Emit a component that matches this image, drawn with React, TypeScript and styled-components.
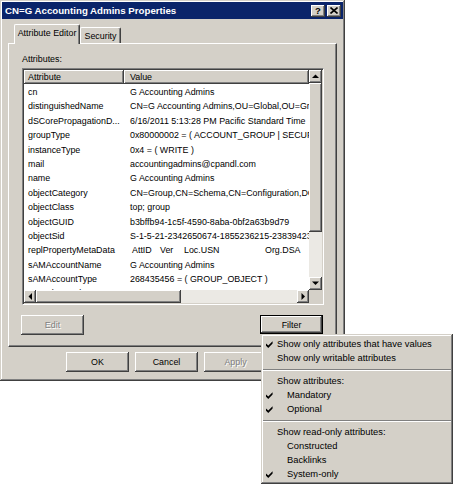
import React from 'react';
import styled, { createGlobalStyle, css } from 'styled-components';

const FACE = '#d4d0c8';
const SHADOW = '#808080';
const DARK = '#404040';
const UI_FONT = '"Liberation Sans", Arial, sans-serif';

const GlobalStyle = createGlobalStyle`
  html, body { margin: 0; padding: 0; background: #ffffff; }
  body { font-family: ${UI_FONT}; color: #000; }
`;

const buttonBevel = css`
  box-shadow: inset -1px -1px ${DARK}, inset 1px 1px #ffffff, inset -2px -2px ${SHADOW}, inset 2px 2px ${FACE};
`;

const frameBevel = css`
  box-shadow: inset -1px -1px ${DARK}, inset 1px 1px ${FACE}, inset -2px -2px ${SHADOW}, inset 2px 2px #ffffff;
`;

const Page = styled.div`
  position: relative;
  width: 454px;
  height: 491px;
  overflow: hidden;
`;

const Window = styled.div`
  width: 345px;
  height: 381px;
  box-sizing: border-box;
  padding: 2px;
  background: ${FACE};
  ${frameBevel}
  display: flex;
  flex-direction: column;
`;

const TitleBar = styled.div`
  height: 17px;
  background: #0a246a;
  color: #ffffff;
  display: flex;
  align-items: center;
  padding: 0 2px 0 3px;
  font-size: 9.7px;
  font-weight: bold;
`;

const TitleText = styled.span`
  flex: 1;
  white-space: nowrap;
`;

const CaptionButtons = styled.div`
  display: flex;
  gap: 2px;
`;

const CaptionButton = styled.div`
  width: 14px;
  height: 12px;
  background: ${FACE};
  ${buttonBevel}
  color: #000;
  display: flex;
  align-items: center;
  justify-content: center;
  font-size: 9.5px;
  font-weight: bold;
  line-height: 1;
`;

const Body = styled.div`
  padding: 5px 6px 0;
  font-size: 8.9px;
`;

const TabStrip = styled.div`
  height: 19px;
  display: flex;
  align-items: flex-end;
  padding-left: 6px;
`;

const Tab = styled.div<{ $active?: boolean }>`
  position: relative;
  z-index: 1;
  box-sizing: border-box;
  width: ${p => (p.$active ? 66 : 41)}px;
  height: ${p => (p.$active ? 20 : 16)}px;
  margin-bottom: ${p => (p.$active ? -1 : 0)}px;
  background: ${FACE};
  border-top: 1px solid #ffffff;
  border-left: 1px solid #ffffff;
  border-right: 1px solid ${DARK};
  box-shadow: inset -1px 0 ${SHADOW};
  border-radius: 2px 2px 0 0;
  display: flex;
  align-items: ${p => (p.$active ? 'flex-start' : 'center')};
  padding-top: ${p => (p.$active ? 3 : 0)}px;
  justify-content: center;
  white-space: nowrap;
`;

const Panel = styled.div`
  height: 304px;
  box-sizing: border-box;
  border: 1px solid;
  border-color: #ffffff ${DARK} ${DARK} #ffffff;
  box-shadow: inset -1px -1px ${SHADOW};
  padding: 9px 12px 0 13px;
  display: flex;
  flex-direction: column;
`;

const FieldLabel = styled.div`
  height: 12px;
  line-height: 12px;
`;

const ListBox = styled.div`
  margin-top: 3px;
  width: 302px;
  height: 237px;
  box-sizing: border-box;
  border: 1px solid;
  border-color: ${SHADOW} #ffffff #ffffff ${SHADOW};
  box-shadow: inset 1px 1px ${DARK}, inset -1px -1px ${FACE};
  padding: 1px;
  background: #ffffff;
  display: grid;
  grid-template-columns: 1fr 13px;
  grid-template-rows: 1fr 13px;
`;

const ListContent = styled.div`
  overflow: hidden;
  min-width: 0;
`;

const HeaderRow = styled.div`
  display: flex;
  height: 14px;
`;

const HeaderCell = styled.div<{ $width?: number; $pad: number }>`
  ${p => (p.$width ? `width: ${p.$width}px;` : 'flex: 1;')}
  box-sizing: border-box;
  background: ${FACE};
  ${buttonBevel}
  padding-left: ${p => p.$pad}px;
  line-height: 14px;
  white-space: nowrap;
  overflow: hidden;
`;

const Rows = styled.div`
  padding-top: 1px;
`;

const Row = styled.div`
  display: flex;
  height: 14.4px;
  line-height: 14.4px;
  white-space: nowrap;
`;

const AttrCell = styled.div`
  width: 100px;
  flex: none;
  box-sizing: border-box;
  padding-left: 4px;
  overflow: hidden;
`;

const ValueCell = styled.div`
  flex: 1;
  padding-left: 6px;
  overflow: hidden;
  display: flex;
`;

const MetaCol = styled.span<{ $w?: number; $pad?: number }>`
  ${p => (p.$w ? `width: ${p.$w}px;` : '')}
  flex: none;
  padding-left: ${p => p.$pad ?? 0}px;
`;

const ScrollBar = styled.div<{ $vertical?: boolean }>`
  display: flex;
  flex-direction: ${p => (p.$vertical ? 'column' : 'row')};
  background: #ebe9e4;
`;

const ScrollArrow = styled.div<{ $size: number; $vertical?: boolean }>`
  flex: none;
  ${p => (p.$vertical ? `height: ${p.$size}px;` : `width: ${p.$size}px;`)}
  background: ${FACE};
  ${buttonBevel}
  display: flex;
  align-items: center;
  justify-content: center;
`;

const ScrollThumb = styled.div<{ $size: number; $vertical?: boolean }>`
  flex: none;
  ${p => (p.$vertical ? `height: ${p.$size}px;` : `width: ${p.$size}px;`)}
  background: ${FACE};
  ${buttonBevel}
`;

const ScrollTrack = styled.div`
  flex: 1;
`;

const Corner = styled.div`
  background: ${FACE};
`;

const PanelButtons = styled.div`
  margin: 10px 1px 0 -1px;
  display: flex;
  justify-content: space-between;
`;

const PushButton = styled.div<{ $disabled?: boolean; $default?: boolean }>`
  width: 63px;
  height: ${p => (p.$default ? 19 : 20)}px;
  box-sizing: border-box;
  background: ${FACE};
  ${buttonBevel}
  ${p => (p.$default ? 'border: 1px solid #000;' : '')}
  display: flex;
  align-items: center;
  justify-content: center;
  color: ${p => (p.$disabled ? SHADOW : '#000')};
  text-shadow: ${p => (p.$disabled ? '1px 1px #ffffff' : 'none')};
`;

const DialogButtons = styled.div`
  margin-top: 5px;
  padding-left: 58px;
  display: flex;
  gap: 6px;
`;

const Menu = styled.div`
  position: absolute;
  left: 261px;
  top: 334px;
  width: 192px;
  box-sizing: border-box;
  background: ${FACE};
  ${frameBevel}
  padding: 3px;
  font-size: 9.35px;
`;

const MenuItem = styled.div`
  height: 14px;
  line-height: 14px;
  display: flex;
  align-items: center;
  white-space: nowrap;
`;

const CheckCell = styled.div`
  width: 13px;
  flex: none;
  display: flex;
  align-items: center;
  padding-left: 2px;
  box-sizing: border-box;
`;

const MenuLabel = styled.span<{ $indent?: boolean }>`
  padding-left: ${p => (p.$indent ? 10 : 0)}px;
`;

const Separator = styled.div`
  height: 9px;
  margin: 0 -1px;
  display: flex;
  align-items: center;
  &::after {
    content: '';
    flex: 1;
    border-top: 1px solid ${SHADOW};
    border-bottom: 1px solid #ffffff;
  }
`;

const Arrow = ({ dir }: { dir: 'up' | 'down' | 'left' | 'right' }) => {
  const pts = {
    up: '0,4 3.5,0.5 7,4',
    down: '0,0.5 3.5,4 7,0.5',
    left: '4,0 0.5,3.5 4,7',
    right: '0.5,0 4,3.5 0.5,7',
  }[dir];
  const vertical = dir === 'up' || dir === 'down';
  return (
    <svg width={vertical ? 7 : 4.5} height={vertical ? 4.5 : 7} viewBox={vertical ? '0 0 7 4.5' : '0 0 4.5 7'}>
      <polygon points={pts} fill="#000" />
    </svg>
  );
};

const Check = () => (
  <svg width="7" height="7" viewBox="0 0 7 7">
    <path d="M0 2.5 L2.3 4.6 L6.6 0.3 L6.6 2.6 L2.3 6.9 L0 4.7 Z" fill="#000" />
  </svg>
);

const CloseGlyph = () => (
  <svg width="8" height="7" viewBox="0 0 8 7">
    <path d="M0.5 0.5 L7.5 6.5 M7.5 0.5 L0.5 6.5" stroke="#000" strokeWidth="1.6" />
  </svg>
);

const attributes: [string, string][] = [
  ['cn', 'G Accounting Admins'],
  ['distinguishedName', 'CN=G Accounting Admins,OU=Global,OU=Groups,DC=cpandl,DC=com'],
  ['dSCorePropagationD...', '6/16/2011 5:13:28 PM Pacific Standard Time'],
  ['groupType', '0x80000002 = ( ACCOUNT_GROUP | SECURITY_ENABLED )'],
  ['instanceType', '0x4 = ( WRITE )'],
  ['mail', 'accountingadmins@cpandl.com'],
  ['name', 'G Accounting Admins'],
  ['objectCategory', 'CN=Group,CN=Schema,CN=Configuration,DC=cpandl,DC=com'],
  ['objectClass', 'top; group'],
  ['objectGUID', 'b3bffb94-1c5f-4590-8aba-0bf2a63b9d79'],
  ['objectSid', 'S-1-5-21-2342650674-1855236215-2383942310-1124'],
  ['replPropertyMetaData', ''],
  ['sAMAccountName', 'G Accounting Admins'],
  ['sAMAccountType', '268435456 = ( GROUP_OBJECT )'],
  ['uSNChanged', '303787'],
];

type MenuEntry =
  | { kind: 'item'; label: string; checked?: boolean; indent?: boolean }
  | { kind: 'sep' };

const menuEntries: MenuEntry[] = [
  { kind: 'item', label: 'Show only attributes that have values', checked: true },
  { kind: 'item', label: 'Show only writable attributes' },
  { kind: 'sep' },
  { kind: 'item', label: 'Show attributes:' },
  { kind: 'item', label: 'Mandatory', checked: true, indent: true },
  { kind: 'item', label: 'Optional', checked: true, indent: true },
  { kind: 'sep' },
  { kind: 'item', label: 'Show read-only attributes:' },
  { kind: 'item', label: 'Constructed', indent: true },
  { kind: 'item', label: 'Backlinks', indent: true },
  { kind: 'item', label: 'System-only', checked: true, indent: true },
];

export default function App() {
  return (
    <Page>
      <GlobalStyle />
      <Window>
        <TitleBar>
          <TitleText>CN=G Accounting Admins Properties</TitleText>
          <CaptionButtons>
            <CaptionButton>?</CaptionButton>
            <CaptionButton><CloseGlyph /></CaptionButton>
          </CaptionButtons>
        </TitleBar>
        <Body>
          <TabStrip>
            <Tab $active>Attribute Editor</Tab>
            <Tab>Security</Tab>
          </TabStrip>
          <Panel>
            <FieldLabel>Attributes:</FieldLabel>
            <ListBox>
              <ListContent>
                <HeaderRow>
                  <HeaderCell $width={100} $pad={4}>Attribute</HeaderCell>
                  <HeaderCell $pad={6}>Value</HeaderCell>
                </HeaderRow>
                <Rows>
                  {attributes.map(([name, value]) => (
                    <Row key={name}>
                      <AttrCell>{name}</AttrCell>
                      <ValueCell>
                        {name === 'replPropertyMetaData' ? (
                          <>
                            <MetaCol $w={28} $pad={2}>AttID</MetaCol>
                            <MetaCol $w={24}>Ver</MetaCol>
                            <MetaCol $w={81}>Loc.USN</MetaCol>
                            <MetaCol>Org.DSA</MetaCol>
                          </>
                        ) : (
                          value
                        )}
                      </ValueCell>
                    </Row>
                  ))}
                </Rows>
              </ListContent>
              <ScrollBar $vertical>
                <ScrollArrow $vertical $size={13}><Arrow dir="up" /></ScrollArrow>
                <ScrollThumb $vertical $size={149} />
                <ScrollTrack />
                <ScrollArrow $vertical $size={13}><Arrow dir="down" /></ScrollArrow>
              </ScrollBar>
              <ScrollBar>
                <ScrollArrow $size={12}><Arrow dir="left" /></ScrollArrow>
                <ScrollThumb $size={145} />
                <ScrollTrack />
                <ScrollArrow $size={12}><Arrow dir="right" /></ScrollArrow>
              </ScrollBar>
              <Corner />
            </ListBox>
            <PanelButtons>
              <PushButton $disabled>Edit</PushButton>
              <PushButton $default>Filter</PushButton>
            </PanelButtons>
          </Panel>
          <DialogButtons>
            <PushButton>OK</PushButton>
            <PushButton>Cancel</PushButton>
            <PushButton $disabled>Apply</PushButton>
          </DialogButtons>
        </Body>
      </Window>
      <Menu>
        {menuEntries.map((entry, i) =>
          entry.kind === 'sep' ? (
            <Separator key={i} />
          ) : (
            <MenuItem key={i}>
              <CheckCell>{entry.checked && <Check />}</CheckCell>
              <MenuLabel $indent={entry.indent}>{entry.label}</MenuLabel>
            </MenuItem>
          )
        )}
      </Menu>
    </Page>
  );
}
